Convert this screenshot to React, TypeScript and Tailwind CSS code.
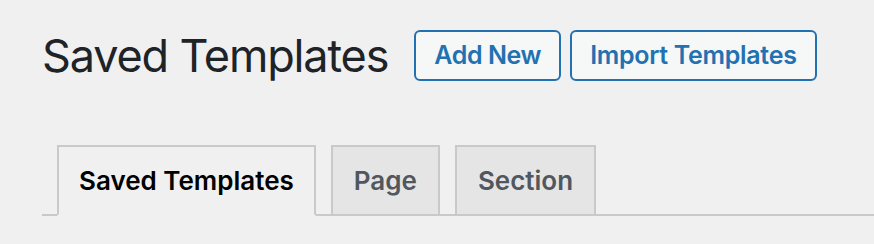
export default function App() {
  const tabs = [
    { label: "Saved Templates", active: true },
    { label: "Page", active: false },
    { label: "Section", active: false },
  ];

  return (
    <div
      className="h-[244px] w-full bg-[#f0f0f1] pl-[42px] pt-[30px]"
      style={{ fontFamily: "Inter, 'Noto Sans', 'Liberation Sans', sans-serif" }}
    >
      <div className="flex items-center">
        <h1 className="text-[45px] font-normal leading-none text-[#1d2327] tracking-[-1.15px]">
          Saved Templates
        </h1>
        <div className="ml-[26px] flex gap-[9px]">
          <button className="h-[51px] rounded-[6px] border-2 border-[#2271b1] bg-[#f6f7f7] px-[18px] text-[25px] font-semibold tracking-[-0.4px] text-[#2271b1]">
            Add New
          </button>
          <button className="h-[51px] rounded-[6px] border-2 border-[#2271b1] bg-[#f6f7f7] px-[18px] text-[25px] font-semibold tracking-[-0.3px] text-[#2271b1]">
            Import Templates
          </button>
        </div>
      </div>

      <nav className="mt-[64px] flex items-end gap-[15px] border-b-2 border-[#c9c9c9] pl-[15px]">
        {tabs.map((t) =>
          t.active ? (
            <div
              key={t.label}
              className="-mb-[2px] flex h-[71px] items-center border-2 border-[#c9c9c9] border-b-[#f0f0f1] bg-[#f0f0f1] px-[20px] text-[26px] font-semibold text-black"
            >
              {t.label}
            </div>
          ) : (
            <div
              key={t.label}
              className="flex h-[69px] items-center border-2 border-b-0 border-[#c9c9c9] bg-[#e5e5e5] px-[21px] text-[26px] font-semibold text-[#50575e]"
            >
              {t.label}
            </div>
          )
        )}
      </nav>
    </div>
  );
}
